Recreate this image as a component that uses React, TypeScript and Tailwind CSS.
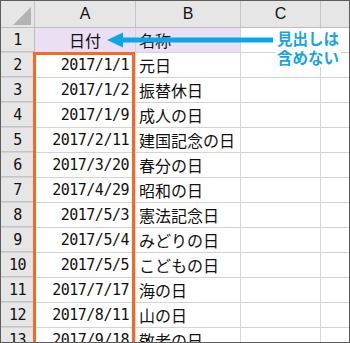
// Spreadsheet view: holiday list with the date column outlined
// and a callout noting that the heading row is not included.

const rows: [string, string][] = [
  ['2017/1/1', '元日'],
  ['2017/1/2', '振替休日'],
  ['2017/1/9', '成人の日'],
  ['2017/2/11', '建国記念の日'],
  ['2017/3/20', '春分の日'],
  ['2017/4/29', '昭和の日'],
  ['2017/5/3', '憲法記念日'],
  ['2017/5/4', 'みどりの日'],
  ['2017/5/5', 'こどもの日'],
  ['2017/7/17', '海の日'],
  ['2017/8/11', '山の日'],
  ['2017/9/18', '敬老の日'],
];

const jp = { fontFamily: '"Noto Sans CJK JP", sans-serif' };
const mono = { fontFamily: '"DejaVu Sans Mono", monospace' };

export default function App() {
  return (
    <div className="relative w-[350px] h-[343px] overflow-hidden border border-[#5c5c5c] bg-white text-[#111]">
      {/* column headers */}
      <div className="flex h-[27px] bg-[#e6e6e6] border-b border-[#bdbdbd]">
        <div className="relative w-[34px] border-r border-[#c4c4c4]">
          <svg className="absolute right-[3px] bottom-[2px]" width="18" height="18" viewBox="0 0 18 18">
            <polygon points="18,0 18,18 0,18" fill="#b3b3b3" />
          </svg>
        </div>
        {['A', 'B', 'C'].map((c, i) => (
          <div
            key={c}
            className={`flex items-center justify-center border-r border-[#c4c4c4] text-[16px] ${
              i === 0 ? 'w-[101px]' : i === 1 ? 'w-[105px]' : 'w-[80px]'
            }`}
            style={{ fontFamily: '"Liberation Sans", sans-serif' }}
          >
            {c}
          </div>
        ))}
        <div className="flex-1" />
      </div>

      {/* heading row */}
      <Row num={1}>
        <div className="flex items-center justify-center w-[101px] h-full bg-[#ebdff4] border-r border-[#d4d4d4] text-[16px]" style={jp}>
          日付
        </div>
        <div className="flex items-center w-[105px] h-full pl-[3px] bg-[#ebdff4] border-r border-[#d4d4d4] text-[16px]" style={jp}>
          名称
        </div>
      </Row>

      {rows.map(([date, name], i) => (
        <Row key={date} num={i + 2}>
          <div className="flex items-center justify-end w-[101px] h-full pr-[6px] border-r border-[#d4d4d4] text-[15px] tracking-[-0.5px]" style={mono}>
            {date}
          </div>
          <div className="flex items-center w-[105px] h-full pl-[3px] border-r border-[#d4d4d4] text-[16px] whitespace-nowrap" style={jp}>
            {name}
          </div>
        </Row>
      ))}

      {/* outline around the date cells */}
      <div className="absolute left-[32px] top-[51px] w-[102px] h-[320px] border-[3px] border-[#f26a24]" />

      {/* pointer arrow */}
      <svg className="absolute left-0 top-0" width="350" height="343">
        <rect x="120" y="36.5" width="152" height="5" fill="#0aa6e8" />
        <polygon points="106,39 122,31.5 122,46.5" fill="#0aa6e8" />
      </svg>

      <div className="absolute left-[274px] top-[28px] px-[2px] bg-white text-[#18a4e2] font-bold text-[15.5px]" style={jp}>
        <div className="h-[19px] leading-[19px]">見出しは</div>
        <div className="h-[19px] leading-[19px]">含めない</div>
      </div>
    </div>
  );
}

function Row({ num, children }: { num: number; children: React.ReactNode }) {
  return (
    <div className="flex h-[25px] border-b border-[#d4d4d4]">
      <div
        className="flex items-center justify-center w-[34px] h-full bg-[#e6e6e6] border-r border-[#bdbdbd] text-[15px] tracking-[-0.5px] shadow-[inset_0_-1px_0_#c4c4c4]"
        style={mono}
      >
        {num}
      </div>
      {children}
      <div className="w-[80px] h-full border-r border-[#d4d4d4]" />
      <div className="flex-1" />
    </div>
  );
}
